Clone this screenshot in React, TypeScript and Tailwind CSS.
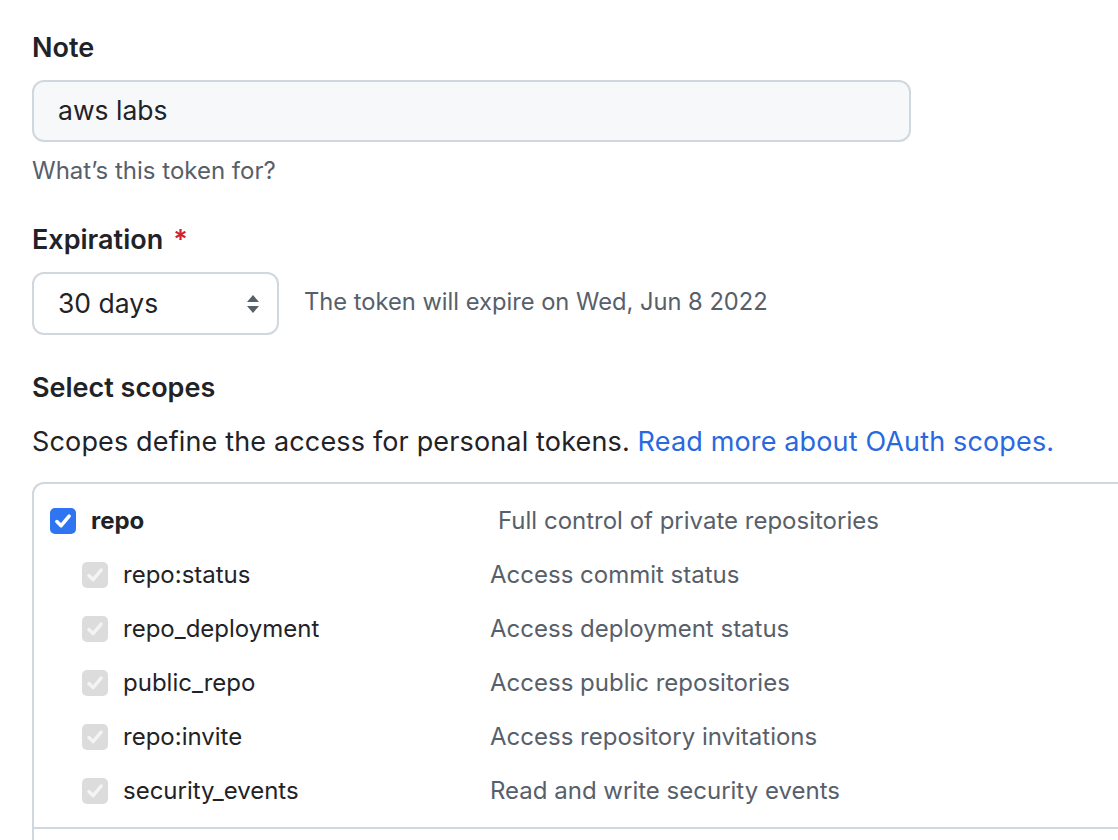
import React from "react";

const font = { fontFamily: "Inter, 'Liberation Sans', sans-serif" };

function BlueCheck() {
  return (
    <div className="w-[26px] h-[26px] rounded-[5px] bg-[#2f74f0] flex items-center justify-center shrink-0">
      <svg width="20" height="20" viewBox="0 0 18 18">
        <path d="M3.5 9.5 L7.3 13.2 L14.5 4.6" stroke="white" strokeWidth="3.2" fill="none" strokeLinecap="round" strokeLinejoin="round" />
      </svg>
    </div>
  );
}

function GreyCheck() {
  return (
    <div className="w-[26px] h-[26px] rounded-[5px] bg-[#dcdcdc] flex items-center justify-center shrink-0">
      <svg width="20" height="20" viewBox="0 0 18 18">
        <path d="M3.5 9.5 L7.3 13.2 L14.5 4.6" stroke="#f4f4f4" strokeWidth="3" fill="none" strokeLinecap="round" strokeLinejoin="round" />
      </svg>
    </div>
  );
}

const subs: [string, string][] = [
  ["repo:status", "Access commit status"],
  ["repo_deployment", "Access deployment status"],
  ["public_repo", "Access public repositories"],
  ["repo:invite", "Access repository invitations"],
  ["security_events", "Read and write security events"],
];

export default function App() {
  return (
    <div className="w-[1118px] h-[840px] bg-white overflow-hidden text-[#1f2328]" style={font}>
      <div className="pl-[32px] pt-[31px]">
        <div className="text-[27px] font-semibold leading-[34px]">Note</div>
        <div className="mt-[15px] w-[879px] h-[62px] rounded-[12px] border-2 border-[#d0d7de] bg-[#f6f8fa] flex items-center pl-[24px] text-[26.5px]">
          aws labs
        </div>
        <div className="mt-[14px] text-[24px] leading-[30px] text-[#57606a]">What’s this token for?</div>

        <div className="mt-[37px] text-[27px] font-semibold leading-[34px] flex items-center">
          Expiration <span className="ml-[10px] text-[#cf222e]">*</span>
        </div>
        <div className="mt-[15px] flex items-center">
          <div className="w-[247px] h-[63px] rounded-[12px] border-2 border-[#d0d7de] bg-white flex items-center pl-[24px] pr-[16px] justify-between text-[26.5px]">
            <span>30 days</span>
            <svg width="16" height="26" viewBox="0 0 16 26">
              <path d="M2 11 L8 4 L14 11 Z" fill="#57606a" />
              <path d="M2 15 L8 22 L14 15 Z" fill="#57606a" />
            </svg>
          </div>
          <div className="ml-[25px] text-[23.7px] text-[#57606a] -mt-[3px]">The token will expire on Wed, Jun 8 2022</div>
        </div>

        <div className="mt-[36px] text-[27px] font-semibold leading-[34px]">Select scopes</div>
        <div className="mt-[20px] text-[27px] leading-[34px] tracking-[0.15px]">
          Scopes define the access for personal tokens.{" "}
          <span className="text-[#2a68e0]">Read more about OAuth scopes.</span>
        </div>

        <div className="mt-[23px] border-l-2 border-t-2 border-[#d0d7de] rounded-tl-[12px] h-[400px]">
          <div className="pt-[20px] pb-[19px] border-b-2 border-[#d0d7de]">
            <div className="flex items-center h-[34px] pl-[16px]">
              <BlueCheck />
              <span className="ml-[15px] w-[407px] text-[24px] font-bold">repo</span>
              <span className="text-[24px] text-[#57606a]">Full control of private repositories</span>
            </div>
            {subs.map(([n, d]) => (
              <div key={n} className="flex items-center h-[34px] mt-[20px] pl-[48px]">
                <GreyCheck />
                <span className="ml-[15px] w-[367px] text-[24px]">{n}</span>
                <span className="text-[24px] text-[#57606a]">{d}</span>
              </div>
            ))}
          </div>
        </div>
      </div>
    </div>
  );
}
